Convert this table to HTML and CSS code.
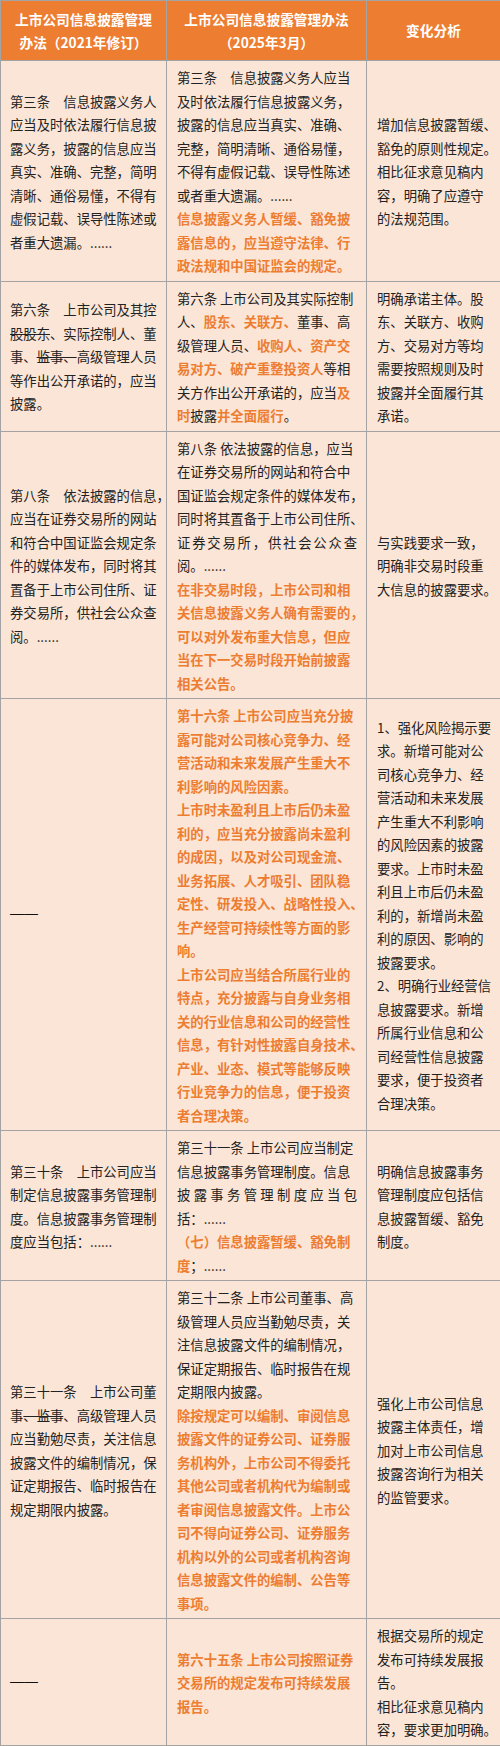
FILE: index.html
```html
<!DOCTYPE html>
<html lang="zh-CN">
<head>
<meta charset="utf-8">
<title>上市公司信息披露管理办法对比</title>
<link rel="stylesheet" href="styles.css">
</head>
<body>
<table class="cmp">
  <colgroup>
    <col class="c1">
    <col class="c2">
    <col class="c3">
  </colgroup>
  <thead>
    <tr>
      <th>上市公司信息披露管理<br>办法（2021年修订）</th>
      <th>上市公司信息披露管理办法<br>（2025年3月）</th>
      <th>变化分析</th>
    </tr>
  </thead>
  <tbody>
    <tr class="r1">
      <td>第三条　信息披露义务人<br>应当及时依法履行信息披<br>露义务，披露的信息应当<br>真实、准确、完整，简明<br>清晰、通俗易懂，不得有<br>虚假记载、误导性陈述或<br>者重大遗漏。......</td>
      <td>第三条　信息披露义务人应当<br>及时依法履行信息披露义务，<br>披露的信息应当真实、准确、<br>完整，简明清晰、通俗易懂，<br>不得有虚假记载、误导性陈述<br>或者重大遗漏。......<br><b class="o">信息披露义务人暂缓、豁免披<br>露信息的，应当遵守法律、行<br>政法规和中国证监会的规定。</b></td>
      <td>增加信息披露暂缓、<br>豁免的原则性规定。<br>相比征求意见稿内<br>容，明确了应遵守<br>的法规范围。</td>
    </tr>
    <tr>
      <td>第六条　上市公司及其控<br><s>股股东</s>、实际控制人、董<br>事、<s>监事、</s>高级管理人员<br>等作出公开承诺的，应当<br>披露。</td>
      <td>第六条 上市公司及其实际控制<br>人、<b class="o">股东、关联方、</b>董事、高<br>级管理人员、<b class="o">收购人、资产交<br>易对方、破产重整投资人</b>等相<br>关方作出公开承诺的，应当<b class="o">及<br>时</b>披露<b class="o">并全面履行</b>。</td>
      <td>明确承诺主体。股<br>东、关联方、收购<br>方、交易对方等均<br>需要按照规则及时<br>披露并全面履行其<br>承诺。</td>
    </tr>
    <tr>
      <td>第八条　依法披露的信息，<br>应当在证券交易所的网站<br>和符合中国证监会规定条<br>件的媒体发布，同时将其<br>置备于上市公司住所、证<br>券交易所，供社会公众查<br>阅。......</td>
      <td>第八条 依法披露的信息，应当<br>在证券交易所的网站和符合中<br>国证监会规定条件的媒体发布，<br>同时将其置备于上市公司住所、<br><span class="jl">证券交易所，供社会公众查</span>阅。......<br><b class="o">在非交易时段，上市公司和相<br>关信息披露义务人确有需要的，<br>可以对外发布重大信息，但应<br>当在下一交易时段开始前披露<br>相关公告。</b></td>
      <td>与实践要求一致，<br>明确非交易时段重<br>大信息的披露要求。</td>
    </tr>
    <tr>
      <td><span class="dash">——</span></td>
      <td><b class="o">第十六条 上市公司应当充分披<br>露可能对公司核心竞争力、经<br>营活动和未来发展产生重大不<br>利影响的风险因素。<br>上市时未盈利且上市后仍未盈<br>利的，应当充分披露尚未盈利<br>的成因，以及对公司现金流、<br>业务拓展、人才吸引、团队稳<br>定性、研发投入、战略性投入、<br>生产经营可持续性等方面的影<br>响。<br>上市公司应当结合所属行业的<br>特点，充分披露与自身业务相<br>关的行业信息和公司的经营性<br>信息，有针对性披露自身技术、<br>产业、业态、模式等能够反映<br>行业竞争力的信息，便于投资<br>者合理决策。</b></td>
      <td>1、强化风险揭示要<br>求。新增可能对公<br>司核心竞争力、经<br>营活动和未来发展<br>产生重大不利影响<br>的风险因素的披露<br>要求。上市时未盈<br>利且上市后仍未盈<br>利的，新增尚未盈<br>利的原因、影响的<br>披露要求。<br>2、明确行业经营信<br>息披露要求。新增<br>所属行业信息和公<br>司经营性信息披露<br>要求，便于投资者<br>合理决策。</td>
    </tr>
    <tr>
      <td>第三十条　上市公司应当<br>制定信息披露事务管理制<br>度。信息披露事务管理制<br>度应当包括：......</td>
      <td>第三十一条 上市公司应当制定<br>信息披露事务管理制度。信息<br><span class="jl">披露事务管理制度应当包</span>括：......<br><b class="o">（七）信息披露暂缓、豁免制<br>度</b>；......</td>
      <td>明确信息披露事务<br>管理制度应包括信<br>息披露暂缓、豁免<br>制度。</td>
    </tr>
    <tr>
      <td>第三十一条　上市公司董<br>事<s>、监事</s>、高级管理人员<br>应当勤勉尽责，关注信息<br>披露文件的编制情况，保<br>证定期报告、临时报告在<br>规定期限内披露。</td>
      <td>第三十二条 上市公司董事、高<br>级管理人员应当勤勉尽责，关<br>注信息披露文件的编制情况，<br>保证定期报告、临时报告在规<br>定期限内披露。<br><b class="o">除按规定可以编制、审阅信息<br>披露文件的证券公司、证券服<br>务机构外，上市公司不得委托<br>其他公司或者机构代为编制或<br>者审阅信息披露文件。上市公<br>司不得向证券公司、证券服务<br>机构以外的公司或者机构咨询<br>信息披露文件的编制、公告等<br>事项。</b></td>
      <td>强化上市公司信息<br>披露主体责任，增<br>加对上市公司信息<br>披露咨询行为相关<br>的监管要求。</td>
    </tr>
    <tr>
      <td><span class="dash">——</span></td>
      <td><b class="o">第六十五条 上市公司按照证券<br>交易所的规定发布可持续发展<br>报告。</b></td>
      <td>根据交易所的规定<br>发布可持续发展报<br>告。<br>相比征求意见稿内<br>容，要求更加明确。</td>
    </tr>
  </tbody>
</table>
</body>
</html>
```
FILE: styles.css
```css
html, body {
  margin: 0;
  padding: 0;
  background: #ffffff;
}

.cmp {
  width: 500px;
  border-collapse: collapse;
  table-layout: fixed;
  font-family: "Noto Sans CJK SC", "Noto Sans", sans-serif;
  font-size: 13.33px;
  color: #222222;
}

.c1 { width: 166px; }
.c2 { width: 200px; }
.c3 { width: 134px; }

.cmp th,
.cmp td {
  border: 1px solid #a3a3a3;
  white-space: nowrap;
  overflow: visible;
}

.cmp th {
  height: 59px;
  padding: 0 4px;
  background: #ed7d31;
  color: #ffffff;
  font-size: 13.7px;
  font-weight: 700;
  line-height: 23px;
  text-align: center;
  vertical-align: middle;
}

.cmp td {
  background: #fbe5d6;
  padding: 5px 9px 3px 10px;
  line-height: 23.5px;
  text-align: left;
  vertical-align: middle;
}

.cmp td:first-child {
  padding-left: 9px;
}

.o {
  color: #ed7d31;
  font-weight: 700;
}

.cmp s {
  text-decoration: line-through;
  text-decoration-thickness: 1px;
}

.jl {
  display: block;
  width: 180px;
  white-space: normal;
  text-align: justify;
  text-align-last: justify;
}

.dash {
  display: inline-block;
  font-family: "Liberation Sans", sans-serif;
  font-size: 14px;
  position: relative;
  top: -2px;
  color: #111111;
}
```
